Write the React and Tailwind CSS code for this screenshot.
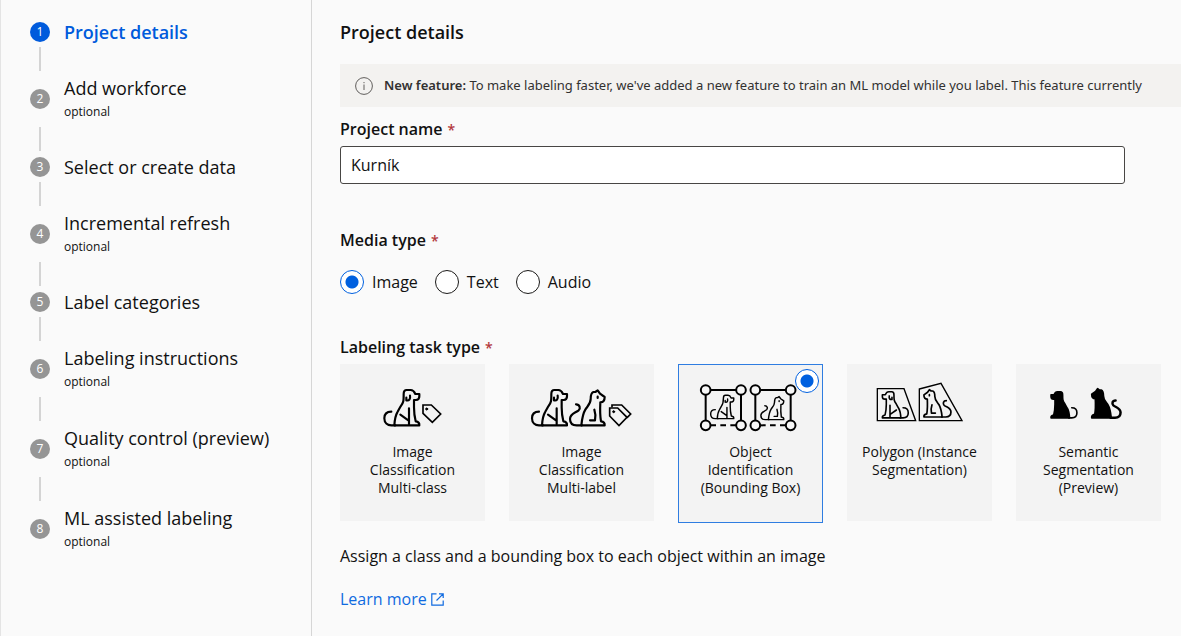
import React from "react";

const steps = [
  { title: "Project details", active: true },
  { title: "Add workforce", optional: true },
  { title: "Select or create data" },
  { title: "Incremental refresh", optional: true },
  { title: "Label categories" },
  { title: "Labeling instructions", optional: true },
  { title: "Quality control (preview)", optional: true },
  { title: "ML assisted labeling", optional: true },
];

const DOG_BODY =
  "M33 109H108C109 101 104 98 97 97C94 85 92 70 92 55V33H98C105 33 108 28 108 22V15H96C93 8 88 3 82 3H70C63 3 61 8 61 15C61 35 61 40 52 52L42 70C36 80 34 92 33 109Z";
const CAT_BODY =
  "M38 109H108C109 101 104 98 97 97C94 80 94 60 95 40C104 40 108 36 108 24L94 14L87 4L80 9H74C66 12 66 20 66 30C66 45 56 52 50 62C42 75 40 90 38 109Z";

function Dog({ solid, ...props }) {
  return (
    <g {...props}>
      <path d={DOG_BODY} fill={solid ? "#000" : "none"} />
      <path d="M24 68C8 68 3 78 3 88C3 101 12 109 24 109H36" />
      {!solid && <path d="M80 20C82 31 77 36 69 34V26M77 58V106M51 77L75 94" />}
    </g>
  );
}

function Cat({ solid, tailWidth, ...props }) {
  return (
    <g {...props}>
      <path d={CAT_BODY} fill={solid ? "#000" : "none"} />
      <path
        d="M22 46C34 46 36 58 30 64C20 72 4 74 4 90C4 102 12 109 24 109H40"
        strokeWidth={tailWidth}
      />
      {!solid && <path d="M77 62C81 74 81 84 79 94H64M87 23V27" />}
    </g>
  );
}

function Art({ viewBox, children }) {
  return (
    <svg
      viewBox={viewBox}
      className="h-14 w-[105px]"
      fill="none"
      stroke="#000"
      strokeWidth="6.5"
      strokeLinecap="round"
      strokeLinejoin="round"
      aria-hidden="true"
    >
      {children}
    </svg>
  );
}

function BoundingBox({ x }) {
  return (
    <g strokeWidth="6">
      <path d={`M${x} 196V90H${x + 106}V196`} />
      <path d={`M${x + 14} 196H${x + 92}`} strokeDasharray="17 13" strokeLinecap="butt" />
      {[
        [x, 90],
        [x + 106, 90],
        [x, 196],
        [x + 106, 196],
      ].map(([cx, cy]) => (
        <circle key={`${cx}-${cy}`} cx={cx} cy={cy} r="14.5" fill="#f7f7f7" />
      ))}
    </g>
  );
}

const tasks = [
  {
    id: "multi-class",
    lines: ["Image", "Classification", "Multi-class"],
    art: (
      <Art viewBox="75 60 315 168">
        <Dog transform="translate(145 87)" />
        <path d="M264 135H289L317 162L292 187L264 160Z" strokeWidth="5" strokeLinejoin="miter" />
        <circle cx="275" cy="147" r="3" fill="#000" strokeWidth="3" />
      </Art>
    ),
  },
  {
    id: "multi-label",
    lines: ["Image", "Classification", "Multi-label"],
    art: (
      <Art viewBox="582 60 315 168">
        <Dog transform="translate(588 87)" />
        <Cat transform="translate(701 87)" />
        <g strokeWidth="5" strokeLinejoin="miter">
          <path d="M824 144H848L876 172L852 197L824 168Z" />
          <path d="M831 140V135H860L887 162L877 172" />
          <circle cx="836" cy="155" r="3" fill="#000" strokeWidth="3" />
        </g>
      </Art>
    ),
  },
  {
    id: "bounding-box",
    lines: ["Object", "Identification", "(Bounding Box)"],
    art: (
      <Art viewBox="84 60 315 168">
        <BoundingBox x={107} />
        <BoundingBox x={256} />
        <Dog transform="translate(120 104) scale(0.66)" />
        <Cat transform="translate(270 107) scale(0.66)" />
      </Art>
    ),
  },
  {
    id: "polygon",
    lines: ["Polygon (Instance", "Segmentation)"],
    art: (
      <Art viewBox="81 60 315 168">
        <g strokeWidth="4" strokeLinejoin="miter">
          <path d="M112 86H192L227 182H112Z" />
          <path d="M238 87L303 70L366 182H238Z" />
        </g>
        <Dog transform="translate(207 93) scale(-0.74 0.74)" />
        <Cat transform="translate(336 86) scale(-0.78 0.78)" />
      </Art>
    ),
  },
  {
    id: "semantic",
    lines: ["Semantic", "Segmentation", "(Preview)"],
    art: (
      <Art viewBox="588 60 315 168">
        <Dog solid transform="translate(713 93) scale(-0.74 0.74)" />
        <Cat solid tailWidth="9" transform="translate(845 83) scale(-0.83 0.83)" />
      </Art>
    ),
  },
];

const radioClass =
  "size-6 shrink-0 appearance-none rounded-full border border-[#1b1a19] bg-white checked:border-[#0060df] checked:bg-[radial-gradient(circle,#0060df_6px,#ffffff_7px)]";

function Required() {
  return <span className="ml-[5px] text-sm leading-none text-[#b3383c]">*</span>;
}

function Sidebar() {
  return (
    <nav
      aria-label="Setup steps"
      className="w-78 shrink-0 border-x border-l-[#e4e4e4] border-r-[#d6d6d6] pt-4 pl-[29px]"
    >
      <ol>
        {steps.map((step, i) => (
          <li key={step.title}>
            {i > 0 && <div className="ml-[9px] h-6 w-0.5 bg-[#d4d4d4]" />}
            <a
              href={`#step-${i + 1}`}
              className={`flex items-center gap-3.5 ${step.optional ? "h-14" : "h-[31px]"}`}
            >
              <span
                className={`flex size-5 shrink-0 items-center justify-center rounded-full text-xs text-white ${
                  step.active ? "bg-[#005bdc]" : "bg-[#959595]"
                }`}
              >
                {i + 1}
              </span>
              <span className={`flex flex-col ${step.optional ? "pb-0.5" : ""}`}>
                <span
                  className={`text-lg leading-7 ${step.active ? "font-semibold text-[#005bdc]" : ""}`}
                >
                  {step.title}
                </span>
                {step.optional && <span className="text-xs leading-5">optional</span>}
              </span>
            </a>
          </li>
        ))}
      </ol>
    </nav>
  );
}

export default function App() {
  return (
    <div className="flex min-h-screen bg-[#fafafa] font-['Open_Sans','Noto_Sans',sans-serif] text-[#111]">
      <Sidebar />
      <main className="min-w-0 flex-1 overflow-hidden pt-5 pl-7">
        <h1 className="text-lg leading-6 font-semibold">Project details</h1>

        <div className="mt-5 flex h-[43px] items-center gap-[11px] overflow-hidden bg-[#f3f2f0] pl-[15px] font-['Noto_Sans','Open_Sans',sans-serif] text-[13px] whitespace-nowrap text-[#323130]">
          <svg viewBox="0 0 18 18" className="size-[18px] shrink-0" fill="none" stroke="#605e5c" aria-hidden="true">
            <circle cx="9" cy="9" r="8.4" />
            <path d="M9 7.5V13M9 5V6.2" />
          </svg>
          <p>
            <b className="font-semibold">New feature:</b> To make labeling faster, we've added a new
            feature to train an ML model while you label. This feature currently
          </p>
        </div>

        <div className="mt-2.5 mr-14">
          <label htmlFor="project-name" className="block text-base leading-6 font-semibold">
            Project name
            <Required />
          </label>
          <input
            id="project-name"
            defaultValue="Kurník"
            className="mt-[5px] block h-[38px] w-full rounded-[3px] border border-[#484644] bg-white px-2.5 text-base"
          />
        </div>

        <fieldset className="mt-11">
          <legend className="text-base leading-6 font-semibold">
            Media type
            <Required />
          </legend>
          <div className="mt-[18px] flex gap-[17px] text-base leading-6">
            {["Image", "Text", "Audio"].map((type, i) => (
              <label key={type} className="flex items-center gap-2">
                <input type="radio" name="media" defaultChecked={i === 0} className={radioClass} />
                {type}
              </label>
            ))}
          </div>
        </fieldset>

        <fieldset className="mt-[41px]">
          <legend className="text-base leading-6 font-semibold">
            Labeling task type
            <Required />
          </legend>
          <div className="mt-[5px] grid grid-cols-5 gap-6 pr-5">
            {tasks.map((task) => (
              <label
                key={task.id}
                className="relative flex h-[157px] flex-col items-center border border-[#f3f3f3] bg-[#f3f3f3] pt-[15px] text-center text-sm leading-[18px] has-checked:h-[159px] has-checked:border-[#2f7de1]"
              >
                {task.art}
                <span className="mt-[7px]">
                  {task.lines.map((line) => (
                    <span key={line} className="block whitespace-nowrap">
                      {line}
                    </span>
                  ))}
                </span>
                <input
                  type="radio"
                  name="task"
                  defaultChecked={task.id === "bounding-box"}
                  className={`absolute top-1 right-[3px] opacity-0 checked:opacity-100 ${radioClass}`}
                />
              </label>
            ))}
          </div>
        </fieldset>

        <p className="mt-[21px] text-base leading-6">
          Assign a class and a bounding box to each object within an image
        </p>
        <a
          href="#learn-more"
          className="mt-[19px] inline-flex items-center gap-1 text-base leading-6 text-[#0f6ae0]"
        >
          Learn more
          <svg viewBox="0 0 13 13" className="size-[13px]" fill="none" stroke="currentColor" strokeWidth="1.2" aria-hidden="true">
            <path d="M5.5 .8H.8V12.2H12.2V7.5M8 .8H12.2V5M12.2 .8L5.5 7.5" />
          </svg>
        </a>
      </main>
    </div>
  );
}
